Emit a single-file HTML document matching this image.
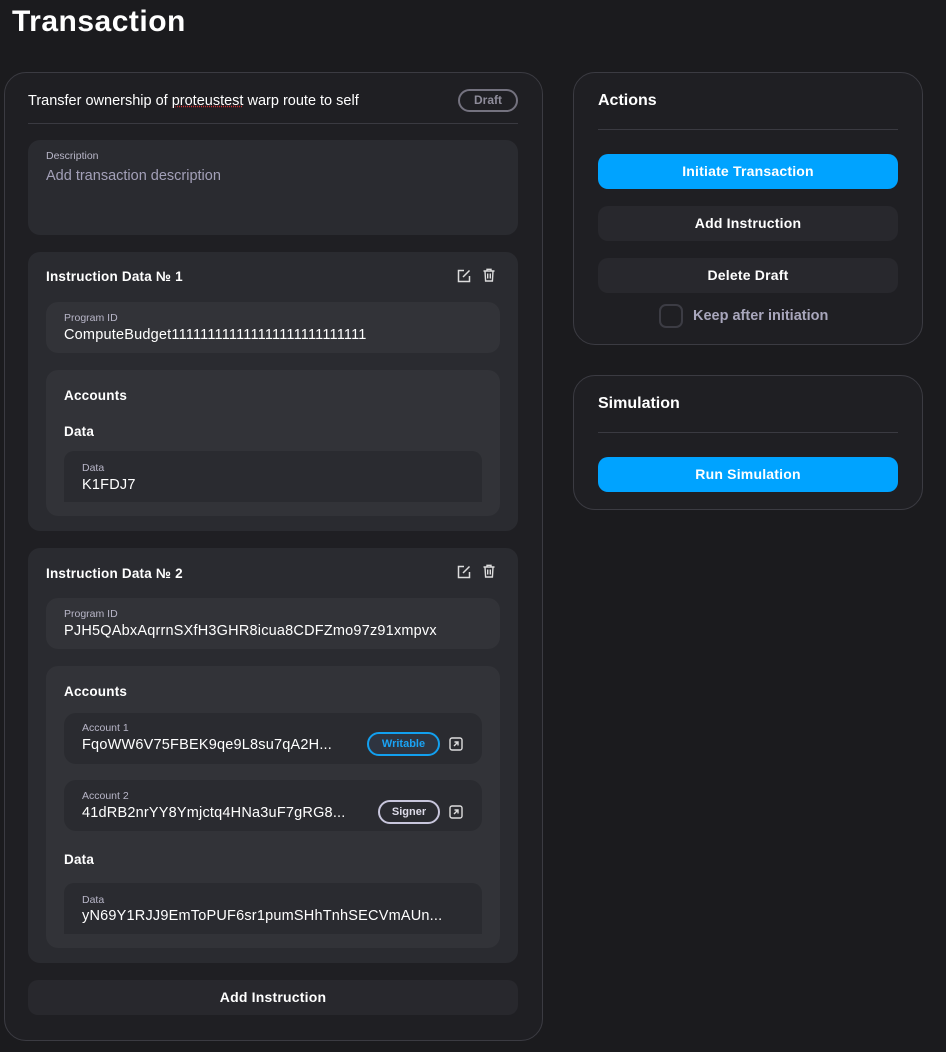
<!DOCTYPE html>
<html><head><meta charset="utf-8"><style>
*{box-sizing:border-box;margin:0;padding:0}
body{width:946px;height:1052px;background:#1b1b1e;font-family:"Liberation Sans",sans-serif;color:#fff;position:relative;overflow:hidden}
.a{position:absolute}
.card{position:absolute;background:#1f1f23;border:1px solid #3b3b42;border-radius:22px}
.box{position:absolute;border-radius:12px}
.b1{background:#2a2b30}
.b2{background:#323338}
.lbl{position:absolute;font-size:10.5px;color:#b8b6c8;white-space:nowrap}
.val{position:absolute;font-size:14.5px;color:#fff;white-space:nowrap;letter-spacing:.2px}
.h{position:absolute;font-size:13.5px;font-weight:bold;white-space:nowrap;letter-spacing:.2px}
.btn{position:absolute;border-radius:10px;background:#28282d;font-weight:bold;font-size:14px;text-align:center;line-height:35px;letter-spacing:.2px}
.blue{background:#00a3ff}
.div{position:absolute;height:1px;background:#3a3a41}
.ic{position:absolute;width:14px;height:14px}
</style></head><body>
<div class="a" style="left:12px;top:5px;font-size:30px;font-weight:bold;letter-spacing:0.5px">Transaction</div>

<div class="card" style="left:4px;top:72px;width:539px;height:969px"></div>
<div class="a" style="left:28px;top:93px;font-size:14.5px">Transfer ownership of <span style="text-decoration:underline dotted #d03030">proteustest</span> warp route to self</div>
<div class="a" style="left:458px;top:89px;width:60px;height:23px;border:2px solid #74727f;border-radius:12px;color:#8e8c9a;font-size:12px;font-weight:bold;text-align:center;line-height:19px">Draft</div>
<div class="div" style="left:28px;top:123px;width:490px"></div>

<div class="box b1" style="left:28px;top:140px;width:490px;height:95px"></div>
<div class="lbl" style="left:46px;top:150px">Description</div>
<div class="a" style="left:46px;top:168px;font-size:14.5px;color:#a3a0b8">Add transaction description</div>

<!-- Instruction 1 -->
<div class="box b1" style="left:28px;top:252px;width:490px;height:279px"></div>
<div class="h" style="left:46px;top:269px">Instruction Data № 1</div>
<svg class="ic" style="left:457px;top:269px" viewBox="0 0 14 14" fill="none" stroke="#ddd" stroke-width="1.5"><path d="M7 1.5H1.5v11h11V7"/><path d="M6 8l6.5-6.5"/></svg>
<svg class="ic" style="left:482px;top:268px" viewBox="0 0 14 14" fill="none" stroke="#ddd" stroke-width="1.4"><path d="M1.5 3h11M5 3V1.3h4V3M3 3l.6 10h6.8L11 3M5.7 5.5v5M8.3 5.5v5"/></svg>
<div class="box b2" style="left:46px;top:302px;width:454px;height:51px"></div>
<div class="lbl" style="left:64px;top:312px">Program ID</div>
<div class="val" style="left:64px;top:327px">ComputeBudget111111111111111111111111111</div>
<div class="box b2" style="left:46px;top:370px;width:454px;height:146px"></div>
<div class="h" style="left:64px;top:388px">Accounts</div>
<div class="h" style="left:64px;top:424px">Data</div>
<div class="box b1" style="left:64px;top:451px;width:418px;height:51px;border-radius:10px 10px 0 0"></div>
<div class="lbl" style="left:82px;top:462px">Data</div>
<div class="val" style="left:82px;top:477px">K1FDJ7</div>

<!-- Instruction 2 -->
<div class="box b1" style="left:28px;top:548px;width:490px;height:415px"></div>
<div class="h" style="left:46px;top:566px">Instruction Data № 2</div>
<svg class="ic" style="left:457px;top:565px" viewBox="0 0 14 14" fill="none" stroke="#ddd" stroke-width="1.5"><path d="M7 1.5H1.5v11h11V7"/><path d="M6 8l6.5-6.5"/></svg>
<svg class="ic" style="left:482px;top:564px" viewBox="0 0 14 14" fill="none" stroke="#ddd" stroke-width="1.4"><path d="M1.5 3h11M5 3V1.3h4V3M3 3l.6 10h6.8L11 3M5.7 5.5v5M8.3 5.5v5"/></svg>
<div class="box b2" style="left:46px;top:598px;width:454px;height:51px"></div>
<div class="lbl" style="left:64px;top:608px">Program ID</div>
<div class="val" style="left:64px;top:623px">PJH5QAbxAqrrnSXfH3GHR8icua8CDFZmo97z91xmpvx</div>
<div class="box b2" style="left:46px;top:666px;width:454px;height:282px"></div>
<div class="h" style="left:64px;top:684px">Accounts</div>

<div class="box b1" style="left:64px;top:713px;width:418px;height:51px"></div>
<div class="lbl" style="left:82px;top:722px">Account 1</div>
<div class="val" style="left:82px;top:737px">FqoWW6V75FBEK9qe9L8su7qA2H...</div>
<div class="a" style="left:367px;top:732px;width:73px;height:24px;border:2px solid #12a0f0;border-radius:12px;background:#2e3440;color:#1aa3f5;font-size:11px;font-weight:bold;text-align:center;line-height:20px">Writable</div>
<svg class="ic" style="left:449px;top:737px" viewBox="0 0 14 14" fill="none" stroke="#ddd" stroke-width="1.4"><rect x="1" y="1" width="12" height="12" rx="2"/><path d="M5 9l4-4M5.5 5H9v3.5"/></svg>

<div class="box b1" style="left:64px;top:780px;width:418px;height:51px"></div>
<div class="lbl" style="left:82px;top:790px">Account 2</div>
<div class="val" style="left:82px;top:805px">41dRB2nrYY8Ymjctq4HNa3uF7gRG8...</div>
<div class="a" style="left:378px;top:800px;width:62px;height:24px;border:2px solid #c8c6dc;border-radius:12px;color:#dddbe8;font-size:11px;font-weight:bold;text-align:center;line-height:20px">Signer</div>
<svg class="ic" style="left:449px;top:805px" viewBox="0 0 14 14" fill="none" stroke="#ddd" stroke-width="1.4"><rect x="1" y="1" width="12" height="12" rx="2"/><path d="M5 9l4-4M5.5 5H9v3.5"/></svg>

<div class="h" style="left:64px;top:852px">Data</div>
<div class="box b1" style="left:64px;top:883px;width:418px;height:51px;border-radius:10px 10px 0 0"></div>
<div class="lbl" style="left:82px;top:894px">Data</div>
<div class="val" style="left:82px;top:908px">yN69Y1RJJ9EmToPUF6sr1pumSHhTnhSECVmAUn...</div>

<div class="btn" style="left:28px;top:980px;width:490px;height:35px">Add Instruction</div>

<!-- Actions -->
<div class="card" style="left:573px;top:72px;width:350px;height:273px"></div>
<div class="a" style="left:598px;top:92px;font-size:16px;font-weight:bold">Actions</div>
<div class="div" style="left:598px;top:129px;width:300px"></div>
<div class="btn blue" style="left:598px;top:154px;width:300px;height:35px">Initiate Transaction</div>
<div class="btn" style="left:598px;top:206px;width:300px;height:35px">Add Instruction</div>
<div class="btn" style="left:598px;top:258px;width:300px;height:35px">Delete Draft</div>
<div class="a" style="left:659px;top:304px;width:24px;height:24px;border:2px solid #3c3c44;border-radius:7px"></div>
<div class="a" style="left:693px;top:308px;font-size:14.5px;font-weight:bold;color:#a8a6bc">Keep after initiation</div>

<!-- Simulation -->
<div class="card" style="left:573px;top:375px;width:350px;height:135px"></div>
<div class="a" style="left:598px;top:395px;font-size:16px;font-weight:bold">Simulation</div>
<div class="div" style="left:598px;top:432px;width:300px"></div>
<div class="btn blue" style="left:598px;top:457px;width:300px;height:35px">Run Simulation</div>
</body></html>
